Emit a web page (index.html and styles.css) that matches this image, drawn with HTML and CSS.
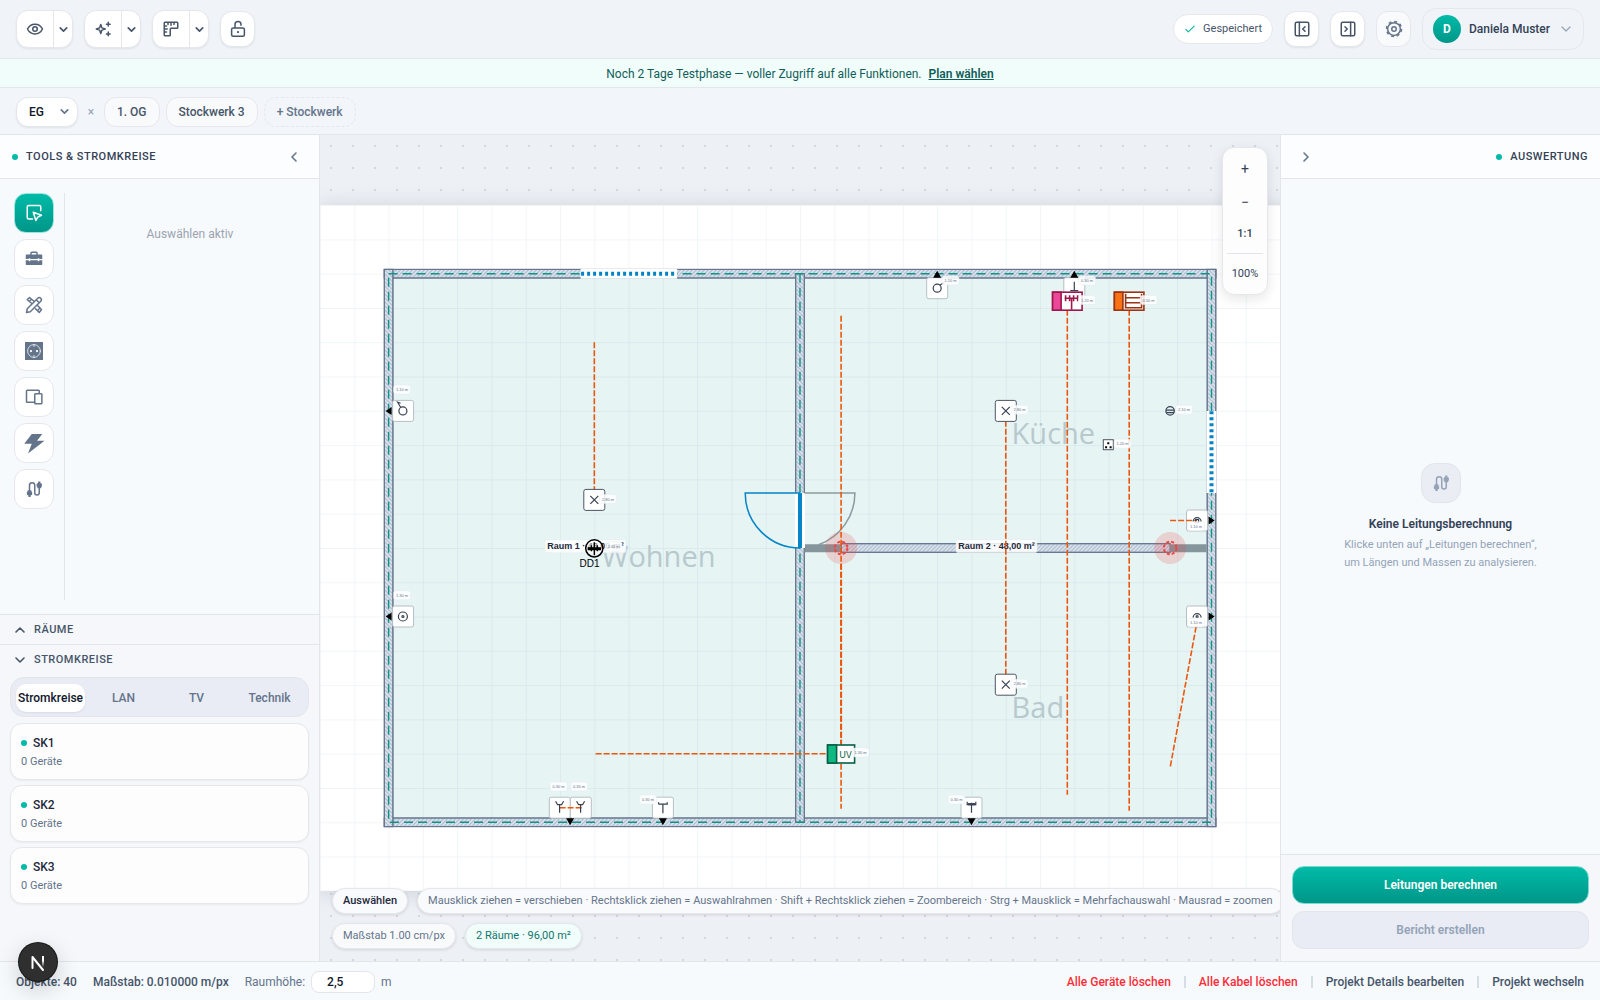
FILE: index.html
```html
<!DOCTYPE html>
<html lang="de">
<head>
<meta charset="utf-8">
<meta name="viewport" content="width=device-width, initial-scale=1">
<title>Elektroplanung</title>
<link rel="stylesheet" href="styles.css">
</head>
<body>
<svg class="defs" aria-hidden="true">
  <symbol id="down" viewBox="0 0 16 16"><path d="M4 6l4 4 4-4"/></symbol>
  <symbol id="up" viewBox="0 0 16 16"><path d="M4 10l4-4 4 4"/></symbol>
  <symbol id="left" viewBox="0 0 16 16"><path d="M10 4L6 8l4 4"/></symbol>
  <symbol id="right" viewBox="0 0 16 16"><path d="M6 4l4 4-4 4"/></symbol>
  <symbol id="cable" viewBox="0 0 24 24"><path d="M6 15V7a3.500 3.500 0 0 1 7 0v10a3 3 0 0 0 6 0V8"/><path class="solid" d="M3.500 13.500h5v2h1v4l-2 1v2h-3v-2l-2-1v-4h1zM16.500 11h5V9h1V5l-2-1V2h-3v2l-2 1v4h1z"/></symbol>
</svg>
<div class="app">
  <header class="topbar">
    <div class="row gap-lg">
      <div class="split">
        <button type="button" class="split-main" aria-label="Ansicht"><svg class="ico" viewBox="0 0 24 24"><path d="M2 12c2-4 5.500-6.500 10-6.500S20 8 22 12c-2 4-5.500 6.500-10 6.500S4 16 2 12z"/><circle cx="12" cy="12" r="3"/></svg></button>
        <button type="button" class="split-more" aria-label="Ansicht Optionen"><svg class="chev"><use href="#down"/></svg></button>
      </div>
      <div class="split">
        <button type="button" class="split-main" aria-label="Assistent"><svg class="ico" viewBox="0 0 24 24"><path d="M9 6l1.500 4.500L15 12l-4.500 1.500L9 18l-1.500-4.500L3 12l4.500-1.500zM19 3v5M16.500 5.500h5M19 16v5M16.500 18.500h5"/></svg></button>
        <button type="button" class="split-more" aria-label="Assistent Optionen"><svg class="chev"><use href="#down"/></svg></button>
      </div>
      <div class="split">
        <button type="button" class="split-main" aria-label="Lineal"><svg class="ico" viewBox="0 0 24 24"><path d="M4 3h16a1 1 0 0 1 1 1v6a1 1 0 0 1-1 1h-8a1 1 0 0 0-1 1v8a1 1 0 0 1-1 1H4a1 1 0 0 1-1-1V4a1 1 0 0 1 1-1zM3 8h3M3 12h4M3 16h3M8 3v3M12 3v4M16 3v3"/></svg></button>
        <button type="button" class="split-more" aria-label="Lineal Optionen"><svg class="chev"><use href="#down"/></svg></button>
      </div>
      <button type="button" class="square" aria-label="Sperren"><svg class="ico" viewBox="0 0 24 24"><rect x="3.500" y="10.500" width="17" height="11" rx="2"/><path d="M8 10V6a4 4 0 0 1 8 0v1"/><circle class="solid" cx="12" cy="16" r="1.500"/></svg></button>
    </div>
    <div class="row gap-lg">
      <span class="saved"><svg class="ico-sm teal" viewBox="0 0 12 12"><path d="M1 6.500l3 3 7-7"/></svg>Gespeichert</span>
      <button type="button" class="square" aria-label="Linke Leiste"><svg class="ico" viewBox="0 0 24 24"><rect x="3" y="3" width="18" height="18" rx="2"/><path d="M8.500 3v18M16 9l-3 3 3 3"/></svg></button>
      <button type="button" class="square" aria-label="Rechte Leiste"><svg class="ico" viewBox="0 0 24 24"><rect x="3" y="3" width="18" height="18" rx="2"/><path d="M15.500 3v18M8 9l3 3-3 3"/></svg></button>
      <button type="button" class="square faint" aria-label="Einstellungen"><svg class="ico" viewBox="0 0 24 24"><circle cx="12" cy="12" r="8.500"/><circle class="teeth" cx="12" cy="12" r="10"/><circle cx="12" cy="12" r="3"/></svg></button>
      <button type="button" class="user"><span class="avatar">D</span>Daniela Muster<svg class="chev-lg thin"><use href="#down"/></svg></button>
    </div>
  </header>

  <div class="trial">Noch 2 Tage Testphase — voller Zugriff auf alle Funktionen. <a href="#plan">Plan wählen</a></div>

  <nav class="floors" aria-label="Stockwerke">
    <button type="button" class="floor current">EG<svg class="chev"><use href="#down"/></svg></button>
    <button type="button" class="floor-close" aria-label="Stockwerk entfernen">×</button>
    <button type="button" class="floor">1. OG</button>
    <button type="button" class="floor">Stockwerk 3</button>
    <button type="button" class="floor add">+ Stockwerk</button>
  </nav>

  <main class="work">
    <aside class="panel left">
      <div class="panel-head"><h2><i class="dot"></i>Tools &amp; Stromkreise</h2><button type="button" class="plain" aria-label="Einklappen"><svg class="chev-lg"><use href="#left"/></svg></button></div>
      <div class="tools">
        <div class="toolbar">
          <button type="button" class="tool active" aria-label="Auswählen"><svg class="ico-tool" viewBox="0 0 24 24"><path d="M10 20H5a2 2 0 0 1-2-2V4a2 2 0 0 1 2-2h14a2 2 0 0 1 2 2v5"/><path d="M11 11l11 4-5 2.500L14.500 22z"/></svg></button>
          <button type="button" class="tool" aria-label="Werkzeug"><svg class="ico-tool" viewBox="0 0 24 24"><path class="solid" d="M1 7q0-1 1-1h20q1 0 1 1v5h-4v-1h-2v1H7v-1H5v1H1zM1 13.500h4v1.500h2v-1.500h10v1.500h2v-1.500h4V19q0 1-1 1H2q-1 0-1-1z"/><path d="M8 6V4q0-1 1-1h6q1 0 1 1v2"/></svg></button>
          <button type="button" class="tool" aria-label="Zeichnen"><svg class="ico-tool" viewBox="0 0 24 24"><path d="M2 22l1-5L17 3q2-2 4 0t0 4L7 21zM9 10L3 5l3-3 6 5M6 7l2-2M14 17l5 5 3-4-5-5M17 19l2-2M15 5l4 4"/></svg></button>
          <button type="button" class="tool" aria-label="Steckdosen"><svg class="ico-tool" viewBox="0 0 24 24"><path class="solid" d="M0 0h24v24H0z"/><circle class="white" cx="12" cy="12" r="8.500"/><path class="white" d="M12 3v3M12 18v3"/><circle class="white-solid" cx="8" cy="12" r="1.500"/><circle class="white-solid" cx="16" cy="12" r="1.500"/></svg></button>
          <button type="button" class="tool" aria-label="Geräte"><svg class="ico-tool" viewBox="0 0 24 24"><path d="M13 19H3a1 1 0 0 1-1-1V4a1 1 0 0 1 1-1h15a1 1 0 0 1 1 1v3"/><rect x="13" y="7.500" width="9.500" height="13.500" rx="1"/></svg></button>
          <button type="button" class="tool" aria-label="Strom"><svg class="ico-tool" viewBox="0 0 24 24"><path class="solid" d="M9 0h14l-7 9h10L4 26l5-13H-1z"/></svg></button>
          <button type="button" class="tool" aria-label="Kabel"><svg class="ico-tool"><use href="#cable"/></svg></button>
        </div>
        <p class="tool-hint">Auswählen aktiv</p>
      </div>
      <section class="circuits">
        <button type="button" class="fold"><svg class="chev-lg"><use href="#up"/></svg>Räume</button>
        <button type="button" class="fold"><svg class="chev-lg"><use href="#down"/></svg>Stromkreise</button>
        <div class="tabs">
          <button type="button" class="tab on">Stromkreise</button><button type="button" class="tab">LAN</button><button type="button" class="tab">TV</button><button type="button" class="tab">Technik</button>
        </div>
        <ul class="cards">
          <li class="card"><strong><i class="dot"></i>SK1</strong><span>0 Geräte</span></li>
          <li class="card"><strong><i class="dot"></i>SK2</strong><span>0 Geräte</span></li>
          <li class="card"><strong><i class="dot"></i>SK3</strong><span>0 Geräte</span></li>
        </ul>
      </section>
    </aside>

    <section class="canvas">
      <svg class="plan" role="img" aria-label="Grundriss">
        <defs>
          <pattern id="grid" width="34.286" height="34.286" patternUnits="userSpaceOnUse"><path class="grid-line" d="M0 0H34.286M0 0V34.286"/></pattern>
          <pattern id="hatch" width="4" height="4" patternUnits="userSpaceOnUse"><path class="hatch-line" d="M-1 1L1-1M0 4L4 0M3 5L5 3"/></pattern>
          <pattern id="hatch-v" width="4" height="4" patternUnits="userSpaceOnUse"><path class="hatch-line" d="M-1 3L1 5M0 0L4 4M3-1L5 1"/></pattern>
          <g id="box"><rect class="box" x="-10.500" y="-10.500" width="21" height="21" rx="2"/></g>
          <g id="lamp"><rect class="box dark" x="-10.500" y="-10.500" width="21" height="21" rx="2"/><path class="sym" d="M-4-4L4 4M4-4L-4 4"/></g>
          <g id="tag"><rect class="tag" x="-8.500" y="-4.500" width="17" height="9" rx="2.500"/></g>
          <g id="end"><circle class="halo" r="16"/><circle class="ring" r="6.300"/></g>
        </defs>
        <g transform="translate(68.600 138.700)">
          <rect class="sheet" x="-68.600" y="-68.600" width="2000" height="685.700"/>
          <rect fill="url(#grid)" x="-68.600" y="-68.600" width="2000" height="685.700"/>
          <rect class="room" x="0" y="0" width="822.900" height="548.600"/>
          <!-- walls -->
          <g class="wall">
            <rect x="-4.300" y="-4.300" width="831.500" height="8.600"/><rect class="h" x="-4.300" y="-4.300" width="831.500" height="8.600"/>
            <rect x="-4.300" y="544.300" width="831.500" height="8.600"/><rect class="h" x="-4.300" y="544.300" width="831.500" height="8.600"/>
            <rect x="-4.300" y="-4.300" width="8.600" height="557.200"/><rect class="v" x="-4.300" y="-4.300" width="8.600" height="557.200"/>
            <rect x="818.600" y="-4.300" width="8.600" height="557.200"/><rect class="v" x="818.600" y="-4.300" width="8.600" height="557.200"/>
            <rect x="407.100" y="0" width="8.600" height="548.600"/><rect class="v" x="407.100" y="0" width="8.600" height="548.600"/>
            <rect x="452.600" y="270" width="329" height="8.600"/><rect class="h" x="452.600" y="270" width="329" height="8.600"/>
          </g>
          <path class="axis" d="M0 0H822.900V548.600H0ZM411.400 0V548.600"/>
          <path class="stub" d="M416 274.600H452.600M781.600 274.600H818"/>
          <!-- openings -->
          <path class="gap" d="M192 0H288.500M822.900 137.300V219.400M411.400 219.400V274.300"/>
          <path class="window" d="M192.500 0H288M822.900 137.500V219.400"/>
          <path class="swing-b" d="M416 219.400H466.300A54.900 54.900 0 0 1 430 271"/>
          <path class="swing" d="M411.400 219.400H356.600A54.900 54.900 0 0 0 411.400 274.300"/>
          <path class="leaf" d="M411.400 219.400V274.300"/>
          <text class="room-name" x="213" y="293">Wohnen</text>
          <text class="room-name" x="623" y="170">Küche</text>
          <text class="room-name" x="623" y="444">Bad</text>
          <rect class="tag" x="156.400" y="266" width="81" height="13" rx="2"/><text class="area" x="197" y="275.300">Raum 1 · 48,00 m²</text>
          <rect class="tag" x="567.400" y="266" width="81" height="13" rx="2"/><text class="area" x="608" y="275.300">Raum 2 · 48,00 m²</text>
          <use href="#end" x="452.500" y="274.300"/><use href="#end" x="781.500" y="274.300"/>
          <!-- boxes behind the cables -->
          <use href="#box" x="14.500" y="137.200"/><use href="#box" x="14.500" y="342.800"/>
          <use href="#box" x="548.600" y="14.500"/><use href="#box" x="685.700" y="14.500"/>
          <use href="#box" x="171.200" y="534"/><use href="#box" x="192.200" y="534"/><use href="#box" x="274.300" y="534"/><use href="#box" x="582.900" y="534"/>
          <use href="#box" x="808.400" y="246.800"/><use href="#box" x="808.400" y="342.800"/>
          <!-- cables -->
          <path class="cable" d="M205.700 68.500V216M452.500 42V535M678.700 36V521M740.600 36V537M617.200 147V401M207 480H438M781.500 246.800H808.400M807.500 353L781.500 494M171 534H194"/>
          <path class="cable strong" d="M452.500 290V470"/>
          <!-- wall arrows -->
          <path d="M-3 137.200l6-4v8zM-3 342.800l6-4v8zM548.600-3l4 7h-8zM685.700-3l4 7h-8zM826 246.800l-6-4v8zM826 342.800l-6-4v8zM181.500 551.500l4-7h-8zM274.300 551.500l4-7h-8zM582.900 551.500l4-7h-8z"/>
          <!-- device symbols -->
          <g class="sym">
            <circle cx="14.300" cy="137.200" r="4"/><path d="M12 133.500L9 128.500l3 1"/>
            <circle cx="14.300" cy="342.800" r="4.500"/><circle cx="14.300" cy="342.800" r="1"/>
            <circle cx="548.600" cy="14.500" r="4"/><path d="M551 11.500l5-3"/>
            <path d="M685.700 8v9M681.700 17h8"/>
            <path d="M167 527.500l2 3.500h4l2-3.500M171 531v8M188 527.500l2 3.500h4l2-3.500M192 531v8M270 530.500v-2M270 530.500h8.600v-2M274.300 530.500v9M578.600 528v3h8.600v-3M582.900 529v10"/>
            <path class="fill" d="M580 530h6v1h-6z"/>
            <path d="M804.500 248a4 4 0 1 1 8 0M804.500 344a4 4 0 1 1 8 0"/><path d="M807 246h3v3h-3z"/><circle cx="808.500" cy="343" r="1"/>
            <circle cx="781.500" cy="137.200" r="4.200"/><path d="M777.500 136.500h8M777.500 139h8"/>
            <rect x="714.700" y="166" width="10" height="10" class="box dark"/>
          </g>
          <path d="M718.700 168.500h2v2h-2zM716.500 172.500h2v2h-2zM721 172.500h2v2h-2z"/>
          <use href="#lamp" x="205.700" y="226.200"/><use href="#lamp" x="617.200" y="137.200"/><use href="#lamp" x="617.200" y="411"/>
          <circle class="dist" cx="205.700" cy="274.600" r="8.600"/><path d="M199 273.500h3v-2h1.500v2h1.500v-5h1.500v5h1.500v-2h1.500v2h3v3h-3v1h-1.500v-1h-1.500v5h-1.500v-5h-1.500v1h-1.500v-1h-3z"/>
          <text class="dd" x="191" y="293">DD1</text>
          <g class="pink"><rect class="face" x="664" y="18.500" width="29.500" height="18"/><rect class="side" x="664" y="18.500" width="8.500" height="18"/><path d="M676 24.500h14M677 21.500v6M681 21.500v6M685 21.500v6M689 21.500v6M683 25v11"/></g>
          <g class="orange"><rect class="face" x="725.800" y="18.500" width="29.500" height="18"/><rect class="side" x="725.800" y="18.500" width="8.500" height="18"/><path d="M737 20v14h16V20M737 24h16M737 29h16"/></g>
          <g class="green"><rect class="face" x="439" y="471.300" width="27" height="18"/><rect class="side" x="439" y="471.300" width="9" height="18"/><text class="uv" x="457" y="484">UV</text></g>
          <!-- mounting heights -->
          <g class="heights">
            <use href="#tag" x="13.500" y="115.800"/><text x="13.500" y="117.500">1.10 m</text>
            <use href="#tag" x="13.500" y="321.500"/><text x="13.500" y="323">1.30 m</text>
            <use href="#tag" x="219.500" y="225.300"/><text x="219.500" y="227">2.80 m</text>
            <use href="#tag" x="225" y="272.800"/><text x="225" y="274.500">2.40 m</text>
            <use href="#tag" x="562" y="6.800"/><text x="562" y="8.500">1.10 m</text>
            <use href="#tag" x="698.500" y="6.800"/><text x="698.500" y="8.500">0.30 m</text>
            <use href="#tag" x="698.500" y="26.300"/><text x="698.500" y="28">1.20 m</text>
            <use href="#tag" x="760" y="26.300"/><text x="760" y="28">0.50 m</text>
            <use href="#tag" x="631" y="136"/><text x="631" y="137.500">2.80 m</text>
            <use href="#tag" x="795.500" y="136"/><text x="795.500" y="137.500">2.10 m</text>
            <use href="#tag" x="734" y="170"/><text x="734" y="171.700">1.20 m</text>
            <use href="#tag" x="631" y="410"/><text x="631" y="411.700">2.80 m</text>
            <use href="#tag" x="807.500" y="252.500"/><text x="807.500" y="254.200">1.10 m</text>
            <use href="#tag" x="807.500" y="348.700"/><text x="807.500" y="350.400">1.10 m</text>
            <use href="#tag" x="170" y="512.800"/><text x="170" y="514.500">0.30 m</text>
            <use href="#tag" x="190.500" y="512.800"/><text x="190.500" y="514.500">0.30 m</text>
            <use href="#tag" x="259.500" y="525.800"/><text x="259.500" y="527.500">0.30 m</text>
            <use href="#tag" x="568" y="525.800"/><text x="568" y="527.500">0.30 m</text>
            <use href="#tag" x="472" y="478.800"/><text x="472" y="480.500">1.30 m</text>
          </g>
        </g>
      </svg>
      <div class="zoom"><button type="button">+</button><button type="button">−</button><button type="button" class="ratio">1:1</button><output>100%</output></div>
      <div class="chips">
        <div class="row"><span class="chip strong">Auswählen</span><span class="chip">Mausklick ziehen = verschieben · Rechtsklick ziehen = Auswahlrahmen · Shift + Rechtsklick ziehen = Zoombereich · Strg + Mausklick = Mehrfachauswahl · Mausrad = zoomen</span></div>
        <div class="row"><span class="chip">Maßstab 1.00 cm/px</span><span class="chip mint">2 Räume · 96,00 m²</span></div>
      </div>
    </section>

    <aside class="panel right">
      <div class="panel-head"><button type="button" class="plain" aria-label="Einklappen"><svg class="chev-lg"><use href="#right"/></svg></button><h2><i class="dot"></i>Auswertung</h2></div>
      <div class="empty">
        <span class="empty-icon"><svg class="ico"><use href="#cable"/></svg></span>
        <h3>Keine Leitungsberechnung</h3>
        <p>Klicke unten auf „Leitungen berechnen“,<br>um Längen und Massen zu analysieren.</p>
      </div>
      <div class="actions">
        <button type="button" class="primary">Leitungen berechnen</button>
        <button type="button" class="secondary" disabled>Bericht erstellen</button>
      </div>
    </aside>
  </main>

  <footer class="status">
    <div class="row gap-xl"><b>Objekte: 40</b><b>Maßstab: 0.010000 m/px</b><span class="row height"><label for="height">Raumhöhe:</label><input id="height" type="text" value="2,5"><span>m</span></span></div>
    <div class="row links"><button type="button" class="danger">Alle Geräte löschen</button><i></i><button type="button" class="danger">Alle Kabel löschen</button><i></i><button type="button">Projekt Details bearbeiten</button><i></i><button type="button">Projekt wechseln</button></div>
  </footer>
</div>
<button type="button" class="dev" aria-label="Entwicklerwerkzeuge"><svg viewBox="0 0 38 38"><defs><linearGradient id="nfade" x1="0" y1="0" x2="0" y2="1"><stop offset="0.400" stop-color="#fff"/><stop offset="1" stop-color="#fff" stop-opacity="0"/></linearGradient></defs><path class="n-main" d="M13.500 25V14L24 27"/><path class="n-side" d="M23 13h2v11h-2z" fill="url(#nfade)"/></svg></button>
</body>
</html>
```
FILE: styles.css
```css
* { box-sizing: border-box; }
body { margin: 0; font-family: "Segoe UI", Roboto, sans-serif; font-size: 12px; line-height: 16px; color: #334155; background: #f0f4f9; }
button, input { font: inherit; color: inherit; }
button { padding: 0; border: 0; background: none; cursor: pointer; }
h2, h3, p, ul { margin: 0; padding: 0; }
svg { display: block; flex: none; fill: none; stroke: currentColor; stroke-width: 2; stroke-linecap: round; stroke-linejoin: round; }
.defs { position: absolute; width: 0; height: 0; }
.solid { fill: currentColor; stroke: none; }
.white { stroke: #fff; stroke-width: 1; }
.white-solid { fill: #fff; stroke: none; }
.ico { width: 18px; height: 18px; }
.ico-sm { width: 10px; height: 10px; stroke-width: 1.4; }
.ico-tool { width: 18px; height: 18px; overflow: visible; }
.teeth { stroke-dasharray: 4 3.85; stroke-linecap: butt; }
.chev { width: 13px; height: 13px; }
.chev-lg { width: 16px; height: 16px; stroke-width: 1.6; }
.thin { stroke-width: 1.2; }
.teal { color: #14b8a6; }
.row { display: flex; align-items: center; gap: 9px; }
.gap-lg { gap: 11px; }
.gap-xl { gap: 16px; }
.app { display: flex; flex-direction: column; height: 100vh; min-height: 700px; }

.topbar { display: flex; justify-content: space-between; align-items: center; height: 59px; padding: 0 16px; border-bottom: 1px solid #e2e5ea; color: #475569; }
.split, .square { display: flex; background: #fff; border: 1px solid #e5e7eb; border-radius: 12px; box-shadow: 0 1px 2px #0f172a14; }
.split { height: 38px; }
.split button { display: grid; place-items: center; }
.split-main { width: 36px; }
.split .split-more { width: 19px; border-left: 1px solid #e5e7eb; }
.square { width: 35px; height: 36px; align-items: center; justify-content: center; }
.faint { background: #f8fafc; color: #64748b; box-shadow: none; }
.saved { display: flex; align-items: center; gap: 8px; height: 30px; padding: 0 10px 0 11px; background: #fff; border: 1px solid #e5e7eb; border-radius: 15px; font-size: 11px; }
.user { display: flex; align-items: center; gap: 8px; height: 42px; padding: 0 9px 0 10px; border: 1px solid #e5e7eb; border-radius: 14px; font-weight: 500; color: #334155; }
.user svg { color: #94a3b8; }
.avatar { display: grid; place-items: center; width: 28px; height: 28px; border-radius: 50%; background: linear-gradient(#00bba7, #009689); color: #fff; font-weight: 700; }
.trial { height: 29px; padding-top: 7px; background: #f0fdfa; border-bottom: 1px solid #e2e8e8; text-align: center; color: #115e59; }
.trial a { margin-left: 4px; color: inherit; font-weight: 600; }
.floors { display: flex; align-items: center; gap: 6px; height: 47px; padding: 1px 16px 0; background: #f2f5f9; border-bottom: 1px solid #e2e5ea; color: #475569; }
.floor { display: flex; align-items: center; height: 30px; padding: 0 12px; background: #f8fafc; border: 1px solid #e5e7eb; border-radius: 12px; font-weight: 500; }
.current { gap: 14px; padding-right: 6px; background: #fff; color: #0f172a; box-shadow: 0 1px 2px #0f172a14; }
.current svg { color: #64748b; }
.add { background: none; border-style: dashed; color: #64748b; }
.floor-close { width: 14px; color: #94a3b8; }

.work { display: grid; grid-template-columns: 320px minmax(0, 1fr) 320px; flex: 1; min-height: 0; }
.panel { display: flex; flex-direction: column; background: #f6fafd; min-height: 0; }
.left { border-right: 1px solid #e2e5ea; }
.right { border-left: 1px solid #e2e5ea; }
.panel-head { display: flex; justify-content: space-between; align-items: center; height: 44px; padding: 0 12px; background: #fcfdfe; border-bottom: 1px solid #e2e5ea; }
.left .panel-head { padding-right: 17px; }
.right .panel-head { padding-left: 17px; }
.panel-head .chev-lg { color: #64748b; }
h2 { display: flex; align-items: center; gap: 8px; font-size: 11px; font-weight: 500; text-transform: uppercase; letter-spacing: 0.5px; }
.dot { width: 6px; height: 6px; border-radius: 50%; background: #00bba7; }
.tools { display: flex; flex: 1; padding: 14px 4px 14px 14px; min-height: 0; }
.toolbar { display: flex; flex-direction: column; gap: 6px; width: 51px; border-right: 1px solid #e2e5ea; }
.tool { display: grid; place-items: center; width: 40px; height: 40px; background: #fff; border: 1px solid #e5e7eb; border-radius: 12px; color: #64748b; }
.active { background: linear-gradient(#00bba7, #009689); border-color: #99e4dc; color: #fff; }
.tool-hint { flex: 1; padding-top: 33px; text-align: center; color: #9ca3af; }
.circuits { height: 347px; background: #f5f7fb; }
.fold { display: flex; align-items: center; gap: 6px; width: 100%; height: 30px; padding: 0 12px; border-top: 1px solid #e2e5ea; font-size: 11px; font-weight: 500; text-transform: uppercase; letter-spacing: 0.5px; color: #475569; }
.tabs { display: grid; grid-template-columns: repeat(4, minmax(0, 1fr)); gap: 4px; height: 40px; margin: 3px 10px 6px; padding: 6px 4px 4px 5px; background: #e9ecf4; border: 1px solid #e2e5ea; border-radius: 14px; font-weight: 500; color: #64748b; }
.tab { border-radius: 10px; white-space: nowrap; }
.on { background: #fff; color: #0f172a; box-shadow: 0 1px 2px #0f172a14; }
.cards { display: flex; flex-direction: column; gap: 5px; padding: 0 10px; list-style: none; }
.card { display: flex; flex-direction: column; gap: 3px; height: 57px; padding: 11px 10px 10px; background: #fdfdfe; border: 1px solid #e5e7eb; border-radius: 12px; box-shadow: 0 1px 2px #0f172a0d; }
.card strong { display: flex; align-items: center; gap: 6px; font-weight: 500; color: #1e293b; }
.card span { font-size: 11px; color: #64748b; }

.canvas { position: relative; overflow: hidden; background: #edf0f5 radial-gradient(circle, #d3d8e0 1px, transparent 1px) 0 0 / 22px 22px; }
.plan { width: 100%; height: 100%; stroke: none; fill: #000; stroke-linecap: butt; stroke-linejoin: miter; }
.sheet { fill: #fff; filter: drop-shadow(0 2px 10px #0f172a26); }
.grid-line { fill: none; stroke: #e6ebf2; stroke-width: 1; }
.room { fill: #0d8f90; fill-opacity: 0.1; }
.hatch-line { stroke: #94a3b8; stroke-width: 1; }
.wall rect { fill: #dbe4ee; stroke: #64748b; stroke-width: 1; }
.wall .h { fill: url(#hatch); }
.wall .v { fill: url(#hatch-v); }
.axis { fill: none; stroke: #0d9488; stroke-width: 1.4; stroke-dasharray: 9 5; }
.stub { stroke: #84959c; stroke-width: 8; }
.gap { stroke: #fff; stroke-width: 10; }
.window { stroke: #0284c7; stroke-width: 4; stroke-dasharray: 3 3; }
.swing, .swing-b { fill: none; stroke: #0284c7; stroke-width: 1.5; }
.swing-b { stroke: #8a9a9e; }
.leaf { stroke: #0284c7; stroke-width: 4; }
.room-name { font-family: "Segoe UI", "Open Sans", sans-serif; font-size: 29px; fill: #b8c9cd; }
.area { font: bold 9px "Liberation Sans", sans-serif; text-anchor: middle; fill: #1e293b; }
.halo { fill: #ef4444; fill-opacity: 0.2; }
.ring { fill: none; stroke: #ef4444; stroke-width: 2; stroke-dasharray: 3 2; }
.box { fill: #fff; stroke: #b6bfc4; stroke-width: 1; }
.box.dark { stroke: #4b5563; }
.sym { fill: none; stroke: #374151; stroke-width: 1.2; }
.fill { fill: #374151; }
.cable { fill: none; stroke: #ea580c; stroke-width: 1.6; stroke-dasharray: 6 2; }
.cable.strong { stroke-width: 2; }
.dist { fill: #ffffff80; stroke: #000; stroke-width: 1.5; }
.dd { font: 10px "Liberation Sans", sans-serif; }
.uv { font: 9px Inter, sans-serif; text-anchor: middle; fill: #065f46; stroke: none; }
.face { fill: #fff; }
.pink, .orange, .green { fill: none; stroke-width: 1.6; }
.pink { stroke: #9d174d; }
.pink .side { fill: #ec4899; }
.orange { stroke: #9a3412; }
.orange .side { fill: #f97316; }
.green { stroke: #065f46; }
.green .side { fill: #10b981; }
.tag { fill: #fff; fill-opacity: 0.85; stroke: #e2e8f0; stroke-width: 0.5; }
.heights { font: 4px "Liberation Sans", sans-serif; text-anchor: middle; fill: #64748b; }

.zoom { position: absolute; top: 12px; right: 12px; display: flex; flex-direction: column; align-items: center; width: 46px; padding: 4px; background: #fdfdfe; border: 1px solid #e5e7eb; border-radius: 12px; box-shadow: 0 4px 12px #0f172a1a; }
.zoom button { width: 100%; height: 33px; font-size: 14px; color: #334155; }
.zoom .ratio { height: 35px; padding-bottom: 4px; font-size: 11px; font-weight: 500; }
.zoom output { width: 100%; padding: 12px 0 8px; border-top: 1px solid #e2e5ea; text-align: center; font-size: 11px; }
.chips { position: absolute; left: 12px; right: 0; bottom: 12px; display: flex; flex-direction: column; gap: 9px; }
.chip { height: 26px; padding: 0 10px; line-height: 24px; white-space: nowrap; background: #f9fafc; border: 1px solid #e5e7eb; border-radius: 13px; box-shadow: 0 1px 3px #0f172a1f; font-size: 11px; color: #64748b; }
.chip.strong { font-weight: 500; color: #1e293b; }
.mint { background: #f0fdfa; color: #0f766e; }

.empty { display: flex; flex: 1; flex-direction: column; align-items: center; justify-content: center; padding-top: 2px; text-align: center; }
.empty-icon { display: grid; place-items: center; width: 40px; height: 40px; margin-bottom: 12px; border: 1px solid #e2e5ea; border-radius: 14px; background: #eaedf3; color: #94a3b8; }
h3 { margin-bottom: 3px; font-size: 12px; line-height: 18px; font-weight: 600; }
.empty p { font-size: 11px; line-height: 18px; color: #94a3b8; }
.actions { display: flex; flex-direction: column; gap: 7px; padding: 11px 11px 12px; background: #f5f7fb; border-top: 1px solid #e2e5ea; }
.actions button { height: 38px; border: 1px solid #e2e5ea; border-radius: 12px; font-weight: 600; }
.actions .primary { border-color: #7adbd1; background: linear-gradient(#00bba7, #009689); color: #fff; }
.actions .secondary { background: #e9ecf4; color: #94a3b8; }

.status { display: flex; justify-content: space-between; align-items: center; height: 39px; padding: 2px 16px 0; background: #f6fafd; border-top: 1px solid #e2e5ea; color: #475569; }
.status b, .status button { font-weight: 500; }
.height { gap: 6px; color: #64748b; }
.height input { width: 64px; height: 22px; padding: 0 15px; border: 1px solid #e2e5ea; border-radius: 8px; background: #fff; font-weight: 500; color: #0f172a; }
.links { gap: 13px; }
.links i { width: 2px; height: 12px; background: #d5dde6; }
.links .danger { color: #fb2c36; }
.dev { position: fixed; left: 19px; bottom: 19px; width: 38px; height: 38px; border-radius: 50%; background: #2f2f2f; box-shadow: 0 0 0 1px #171717, 0 8px 24px #0003; }
.n-main { stroke: #fff; }
.n-side { stroke: none; }
```
